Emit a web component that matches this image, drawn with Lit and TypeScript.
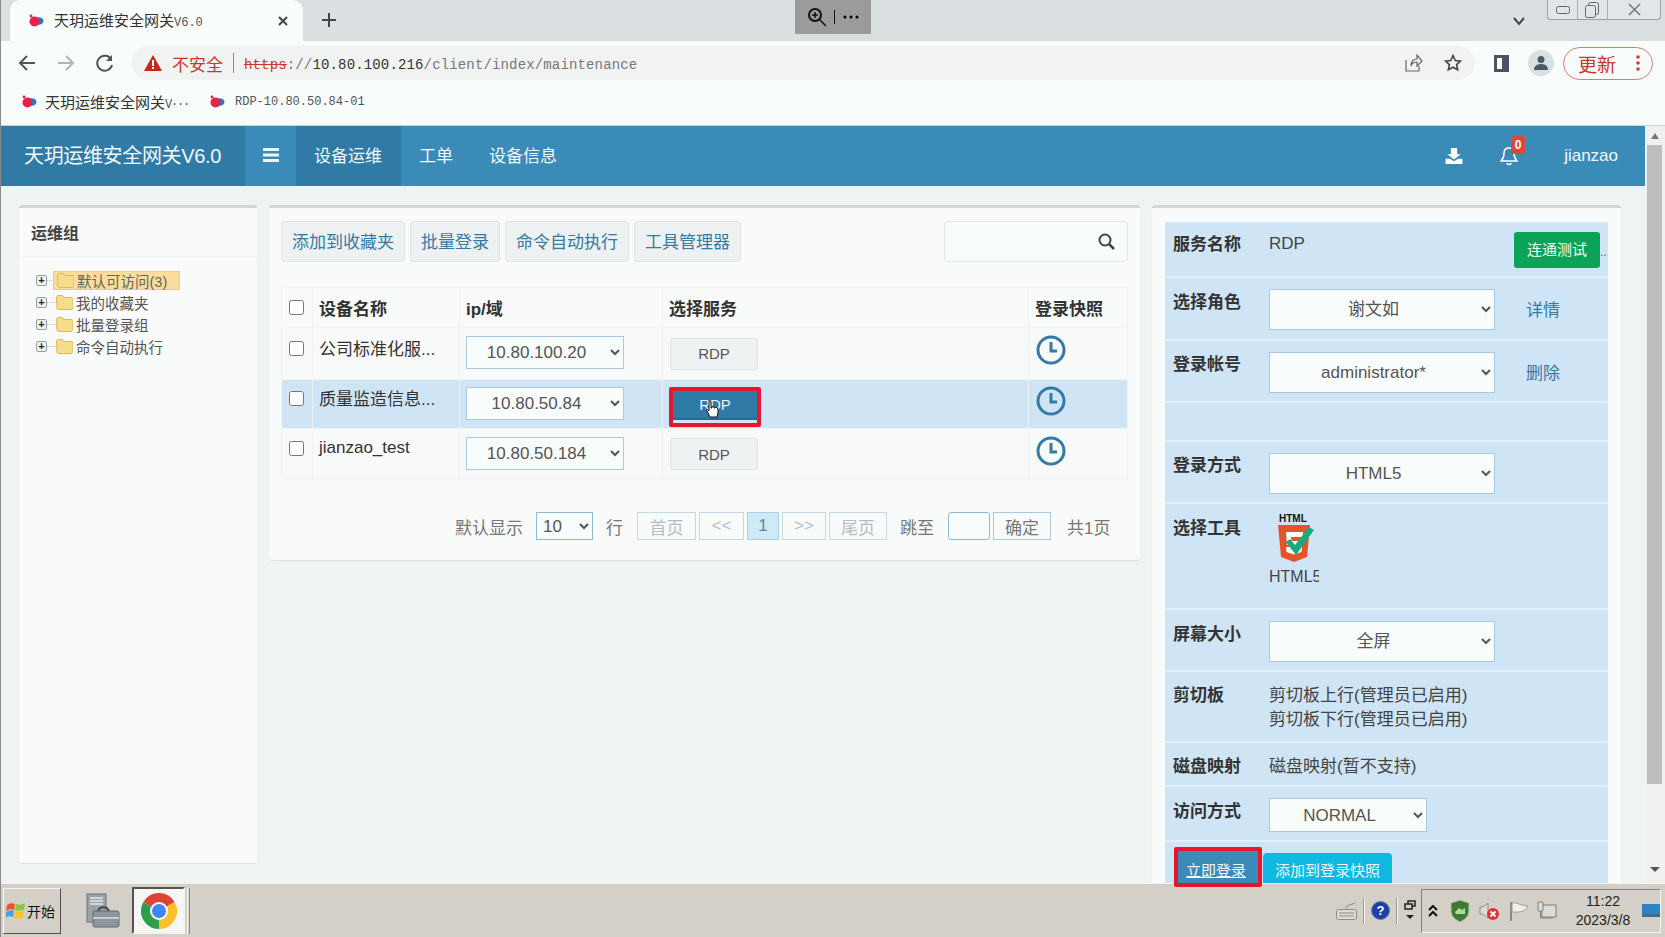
import { css, html, svg, LitElement } from "lit";
import { customElement } from "lit/decorators.js";

const bird = (s = 16) => html`<svg width=${s} height=${s} viewBox="0 0 16 16">
  <ellipse cx="10.500" cy="8" rx="5" ry="3.800" fill="#2b78c2" />
  <circle cx="6.500" cy="8.500" r="5" fill="#e8214a" />
  <circle cx="3" cy="3" r="1.400" fill="#e8214a" />
</svg>`;

const clock = html`<svg width="30" height="30" viewBox="0 0 30 30" fill="none" stroke="#3579a6">
  <circle cx="15" cy="15" r="13" stroke-width="3" />
  <path d="M15 7v9h6" stroke-width="3" />
</svg>`;

const folder = html`<svg width="17" height="15" viewBox="0 0 17 15">
  <path d="M.5 3V1.500l1-1h5l1.500 2h8l1 1v10l-1 1h-14l-1-1z" fill="#f6dd8c" stroke="#d9b95c" />
</svg>`;

const chromeLogo = html`<svg width="36" height="36" viewBox="0 0 36 36">
  <path d="M18 18L2.400 9A18 18 0 0 1 33.600 9Z" fill="#dc4437" />
  <path d="M18 18L33.600 9A18 18 0 0 1 18 36Z" fill="#fbc02d" />
  <path d="M18 18L18 36A18 18 0 0 1 2.400 9Z" fill="#2f9e48" />
  <circle cx="18" cy="18" r="9" fill="#fff" />
  <circle cx="18" cy="18" r="7" fill="#4285f4" />
</svg>`;

const rows = [
  { name: "公司标准化服...", ip: "10.80.100.20", h: 52 },
  { name: "质量监造信息...", ip: "10.80.50.84", h: 49, active: true },
  { name: "jianzao_test", ip: "10.80.50.184", h: 51 },
];

@customElement("app-root")
class AppRoot extends LitElement {
  static styles = css`
    :host {
      display: block;
      font-family: "Liberation Sans", "Noto Sans CJK SC", sans-serif;
      color: #444;
    }

    * {
      box-sizing: border-box;
    }

    .screen {
      position: relative;
      display: flex;
      flex-direction: column;
      width: 1665px;
      height: 937px;
      overflow: hidden;
      border-left: 1px solid #8a8a8a;
      background: #f8fcfa;
    }

    /* browser chrome */
    .tabstrip {
      display: flex;
      align-items: flex-end;
      height: 41px;
      padding-left: 9px;
      background: #dae0e2;
    }

    .tab {
      display: flex;
      align-items: center;
      width: 293px;
      height: 41px;
      padding: 0 14px 0 18px;
      gap: 10px;
      border-radius: 10px 10px 0 0;
      background: #f8fcfa;
      font-size: 15px;
      color: #333;
    }

    .tab-title {
      flex: 1;
      padding-bottom: 2px;
    }

    .tiny {
      font-family: "Liberation Mono", "Noto Sans CJK SC", monospace;
      font-size: 12px;
      color: #555;
    }

    .newtab {
      margin: 0 0 13px 18px;
    }

    .spacer {
      flex: 1;
    }

    .tabs-chevron {
      margin: 0 21px 15px 0;
    }

    .winctl {
      display: flex;
      align-self: flex-start;
      width: 114px;
      height: 20px;
      margin-right: 4px;
      border: 1px solid #98a0a4;
      border-top: 0;
      border-radius: 0 0 4px 4px;
      background: #e2e6e8;
    }

    .winctl span {
      display: flex;
      align-items: center;
      justify-content: center;
      border-right: 1px solid #a8b0b4;
      width: 30px;
    }

    .winctl span:last-child {
      flex: 1;
      border: 0;
    }

    .remote-bar {
      position: absolute;
      left: 794px;
      top: 0;
      display: flex;
      align-items: center;
      justify-content: space-around;
      width: 76px;
      height: 34px;
      padding: 0 8px;
      background: #9a9c9c;
    }

    .toolbar {
      display: flex;
      align-items: center;
      height: 44px;
      padding-left: 17px;
    }

    .nav-btn {
      display: flex;
      width: 39px;
    }

    .nav-btn.last {
      width: 36px;
    }

    .omnibox {
      display: flex;
      align-items: center;
      width: 1343px;
      height: 34px;
      padding-left: 12px;
      border-radius: 17px;
      background: #f1f3f3;
    }

    .not-secure {
      margin-left: 10px;
      font-size: 17px;
      color: #c5392b;
    }

    .omni-sep {
      width: 1px;
      height: 20px;
      margin: 0 10px;
      background: #888;
    }

    .url {
      padding-top: 3px;
      font-family: "Liberation Mono", monospace;
      font-size: 14px;
      letter-spacing: 0.15px;
      color: #777;
    }

    .url s {
      color: #c5392b;
    }

    .url b {
      font-weight: normal;
      color: #333;
    }

    .omni-icons {
      display: flex;
      align-items: center;
      gap: 21px;
      margin: 0 13px 0 auto;
    }

    .panel-icon {
      width: 15px;
      height: 17px;
      margin-left: 19px;
      border: 3px solid #4a5560;
      border-right-width: 7px;
    }

    .avatar {
      display: flex;
      align-items: center;
      justify-content: center;
      width: 26px;
      height: 26px;
      margin-left: 19px;
      border-radius: 50%;
      background: #d8e0e4;
    }

    .update {
      display: flex;
      align-items: center;
      justify-content: space-between;
      width: 90px;
      height: 33px;
      margin-left: 9px;
      padding: 0 12px 0 14px;
      border: 1px solid #d87c72;
      border-radius: 17px;
      font-size: 19px;
      color: #c5392b;
    }

    .bookmarks {
      display: flex;
      align-items: center;
      height: 41px;
      padding: 0 0 7px 20px;
      border-bottom: 1px solid #c8d6dc;
      font-size: 15px;
      color: #333;
    }

    .bookmarks .tiny {
      margin-left: 10px;
      color: #555;
    }

    .mark {
      display: flex;
      align-items: center;
      gap: 8px;
      width: 188px;
    }

    .bookmarks .mark .tiny {
      margin: 0;
      letter-spacing: -1.2px;
    }

    /* page */
    .page {
      display: flex;
      flex: 1;
      min-height: 0;
      overflow: hidden;
      background: #eff3f2;
    }

    .content {
      flex: 1;
      min-width: 0;
    }

    .scrollbar {
      display: flex;
      flex-direction: column;
      align-items: center;
      width: 18px;
      padding-right: 3px;
      background: #f0f0f0;
    }

    .thumb {
      width: 15px;
      height: 639px;
      margin-top: 6px;
      background: #bdbdbd;
    }

    .sb-up {
      margin-top: 7px;
      width: 0;
      height: 0;
      border: 4px solid transparent;
      border-top: 0;
      border-bottom: 6px solid #777;
    }

    .sb-down {
      margin-top: 83px;
      width: 0;
      height: 0;
      border: 5px solid transparent;
      border-bottom: 0;
      border-top: 5px solid #555;
    }

    .topnav {
      display: flex;
      align-items: center;
      height: 60px;
      margin-right: 2px;
      background: #3a8bb8;
      color: #f2f8fb;
      font-size: 17px;
    }

    .brand {
      display: flex;
      align-items: center;
      align-self: stretch;
      width: 244px;
      padding: 0 0 3px 23px;
      background: #2f7ba6;
      font-size: 20px;
      letter-spacing: -0.35px;
    }

    .burger {
      display: flex;
      justify-content: center;
      padding-bottom: 2px;
      width: 51px;
    }

    .nav-item {
      display: flex;
      align-items: center;
      align-self: stretch;
      padding: 0 18px 3px;
    }

    .nav-item.on {
      width: 105px;
      background: #2f7ba6;
    }

    .nav-right {
      display: flex;
      align-items: center;
      margin-left: auto;
      padding-right: 27px;
    }

    .bell {
      position: relative;
      display: flex;
      margin: 0 46px 0 37px;
    }

    .badge {
      position: absolute;
      left: 11px;
      top: -10px;
      width: 14px;
      height: 18px;
      border-radius: 3px;
      background: #d9483b;
      color: #fff;
      font-size: 12px;
      font-weight: bold;
      line-height: 18px;
      text-align: center;
    }

    .columns {
      display: flex;
      align-items: flex-start;
      gap: 12px;
      padding: 19px 0 0 18px;
    }

    .panel {
      border-top: 3px solid #d2d6da;
      border-radius: 3px;
      background: #f8fbfa;
      box-shadow: 0 1px 1px rgba(0, 0, 0, 0.08);
    }

    /* left tree */
    .side {
      width: 238px;
      height: 658px;
    }

    .side-head {
      height: 49px;
      padding: 12px 12px 0;
      border-bottom: 1px solid #f0f3f3;
      font-size: 16px;
      font-weight: bold;
      color: #444;
    }

    .tree {
      display: flex;
      flex-direction: column;
      gap: 3px;
      padding: 14px 0 0 17px;
      font-size: 14.5px;
      color: #555;
    }

    .node {
      display: flex;
      align-items: center;
      height: 19px;
    }

    .twist {
      display: flex;
      align-items: center;
      justify-content: center;
      width: 11px;
      height: 11px;
      border: 1px solid #9a9fa3;
      border-radius: 2px;
      background: #eef0f0;
      color: #222;
      font-size: 11px;
      font-weight: bold;
      line-height: 1;
    }

    .dash {
      width: 9px;
      border-top: 1px dotted #c0c4c8;
    }

    .leaf {
      display: flex;
      align-items: center;
      gap: 3px;
      height: 19px;
      padding: 0 3px 0 0;
    }

    .leaf.sel {
      width: 127px;
      margin-left: -3px;
      padding-left: 3px;
      border: 1px solid #f6c983;
      background: #fbdc9f;
      color: #665;
    }

    /* device list */
    .main {
      width: 871px;
      height: 355px;
      padding: 13px 12px 0;
    }

    .actions {
      display: flex;
      gap: 5px;
      height: 41px;
    }

    .act {
      height: 41px;
      padding: 0 10px 2px;
      border: 1px solid #e0e4e4;
      border-radius: 3px;
      background: #eef1f1;
      color: #3579a6;
      font: inherit;
      font-size: 17px;
    }

    .search {
      display: flex;
      align-items: center;
      justify-content: flex-end;
      width: 184px;
      margin-left: auto;
      padding-right: 12px;
      border: 1px solid #e4e7e7;
      border-radius: 3px;
      background: #f8fcfa;
    }

    table {
      width: 846px;
      margin-top: 25px;
      border-collapse: collapse;
      table-layout: fixed;
      font-size: 17px;
      color: #333;
    }

    th,
    td {
      padding: 0 0 0 6px;
      border: 1px solid #f0f3f3;
      text-align: left;
    }

    th {
      height: 40px;
      font-weight: bold;
    }

    tbody tr {
      background: #f8f9f9;
    }

    tbody tr.on {
      background: #cfe5f6;
    }

    .lift {
      padding-bottom: 11px;
    }

    .lift-s {
      padding-bottom: 2px;
    }

    .name {
      padding-bottom: 13px;
      white-space: nowrap;
      overflow: hidden;
    }

    input[type="checkbox"] {
      display: block;
      width: 15px;
      height: 15px;
      margin: 0 0 0 1px;
    }

    select {
      padding-right: 5px;
      border: 1px solid #a9c9e0;
      background: #f8fcfa;
      color: #555;
      font: inherit;
      font-size: 17px;
      text-align: center;
    }

    .ip {
      display: block;
      width: 158px;
      height: 33px;
      margin-bottom: 2px;
    }

    .rdp {
      display: block;
      width: 88px;
      height: 32px;
      margin-left: 1px;
      border: 1px solid #dfe3e3;
      border-radius: 3px;
      background: #eff2f2;
      color: #555;
      font: inherit;
      font-size: 15px;
    }

    .rdp-on {
      position: relative;
      width: 92px;
      height: 40px;
      margin: 5px 0 0;
      padding: 0 0 4px;
      border: 4px solid #e2182c;
      border-radius: 2px;
      background: #2f7ba6;
      box-shadow: inset 0 -3px 0 #cfe5f6, inset 0 -5px 0 #256a90;
      color: #eef6fa;
    }

    .hand {
      position: absolute;
      left: 33px;
      top: 10px;
    }

    .clock {
      display: block;
      margin-left: 1px;
    }

    .pager {
      display: flex;
      align-items: center;
      gap: 3px;
      height: 28px;
      margin: 32px 0 0 174px;
      font-size: 17px;
      color: #777;
    }

    .pager select {
      width: 57px;
      height: 28px;
      padding: 0 0 0 2px;
      border-color: #8fbad6;
      text-align: left;
    }

    .pg {
      display: flex;
      align-items: center;
      justify-content: center;
      height: 28px;
      border: 1px solid #c4d9e6;
      color: #b4bdc2;
    }

    .pg.cur {
      border-color: #a8d4ea;
      background: #cfe9f7;
      color: #5a8aa5;
    }

    .pg.ok {
      border-color: #a9c9e0;
      color: #777;
    }

    .gap {
      margin-left: 10px;
    }

    .gap-m {
      margin-left: 11px;
    }

    .gap-l {
      margin-left: 13px;
    }

    .jump {
      width: 42px;
      height: 28px;
      border: 1px solid #8fbad6;
      border-radius: 3px;
      background: #f8fcfa;
    }

    /* right form */
    .detail {
      width: 469px;
      height: 700px;
      padding: 14px 13px 0;
      font-size: 17px;
    }

    .form {
      width: 443px;
      background: #cfe5f6;
    }

    .row {
      display: grid;
      grid-template-columns: 96px 257px 1fr;
      padding-left: 8px;
      border-bottom: 2px solid #e0eff9;
      color: #444;
    }

    .label {
      color: #333;
      font-weight: bold;
    }

    .form select {
      display: block;
      width: 226px;
      height: 41px;
      margin-top: 1px;
    }

    .form select.short {
      width: 158px;
      height: 34px;
      margin-top: 0;
    }

    .link {
      padding-top: 8px;
      color: #3579a6;
    }

    .up {
      margin-top: -1px;
    }

    .svc-head {
      margin-top: -2px;
    }

    .svc-value {
      margin-top: 2px;
    }

    .test {
      width: 86px;
      height: 36px;
      margin-left: 1px;
      padding: 0 0 3px;
      border: 0;
      border-radius: 3px;
      background: #0aa358;
      color: #eafff3;
      font: inherit;
      font-size: 15px;
    }

    .more {
      position: absolute;
      left: 87px;
      bottom: 10px;
      font-size: 12px;
      line-height: 1;
      color: #667;
    }

    .test-wrap {
      position: relative;
      align-self: start;
      margin-left: -13px;
    }

    .tool {
      width: 50px;
      overflow: hidden;
      white-space: nowrap;
      font-size: 16px;
    }

    .tool b {
      display: block;
      margin-left: 10px;
      font-size: 10px;
      line-height: 10px;
      color: #111;
    }

    .tool svg {
      display: block;
      margin: -1px 0 5px 6px;
    }

    .clip {
      line-height: 24px;
    }

    .submit {
      display: flex;
      align-items: flex-start;
      gap: 3px;
      padding: 8px 0 0 12px;
    }

    .submit button {
      border: 0;
      color: #f0fafd;
      font: inherit;
      font-size: 15px;
    }

    .go {
      width: 83px;
      height: 40px;
      padding: 0 5px 2px 0;
      background: #3a8bb8;
      text-decoration: underline;
    }

    .snap {
      width: 129px;
      height: 34px;
      padding: 0 0 2px;
      margin-top: 3px;
      border-radius: 4px 4px 0 0;
      background: #0fb8e0;
    }

    .go-mark {
      position: absolute;
      left: 1173px;
      top: 847px;
      width: 88px;
      height: 40px;
      border: 4px solid #e2182c;
      border-radius: 2px;
    }

    /* windows taskbar */
    .taskbar {
      display: flex;
      align-items: center;
      flex: none;
      height: 54px;
      padding-left: 2px;
      border-top: 1px solid #f4f3ef;
      background: #d4d0c8;
    }

    .start {
      display: flex;
      align-items: center;
      gap: 1px;
      width: 58px;
      height: 46px;
      padding-left: 2px;
      border: 1px solid;
      border-color: #f4f3ef #55534e #55534e #f4f3ef;
      color: #111;
      font-size: 14px;
      white-space: nowrap;
    }

    .quick {
      display: flex;
      margin-left: 23px;
    }

    .running {
      display: flex;
      align-items: center;
      justify-content: center;
      width: 53px;
      height: 47px;
      margin-left: 12px;
      border: 2px solid;
      border-color: #55534e #f4f3ef #f4f3ef #55534e;
      background: #f6f7f5;
    }

    .grip {
      width: 3px;
      height: 46px;
      margin-left: 2px;
      border-left: 1px solid #f4f3ef;
      border-right: 1px solid #888;
    }

    .tray-left {
      display: flex;
      align-items: center;
      margin-left: auto;
    }

    .vsep {
      width: 2px;
      height: 26px;
      margin: 0 6px;
      border-left: 1px solid #999;
      border-right: 1px solid #f4f3ef;
    }

    .tray {
      display: flex;
      align-items: center;
      width: 240px;
      height: 44px;
      margin: 0 4px 0 5px;
      padding-left: 6px;
      border: 1px solid;
      border-color: #808080 #f4f3ef #f4f3ef #808080;
    }

    .tray svg {
      flex: none;
    }

    .time {
      width: 66px;
      margin-left: 14px;
      color: #222;
      font-size: 14px;
      line-height: 19px;
      text-align: center;
    }
  `;

  private renderChrome() {
    return html`<div class="tabstrip">
        <div class="tab">
          ${bird()}
          <span class="tab-title">天玥运维安全网关<span class="tiny">V6.0</span></span>
          <svg width="12" height="12" viewBox="0 0 12 12" stroke="#444" stroke-width="2">
            <path d="M2 2l8 8M10 2l-8 8" />
          </svg>
        </div>
        <svg class="newtab" width="16" height="16" viewBox="0 0 16 16" stroke="#444" stroke-width="2">
          <path d="M8 1v14M1 8h14" />
        </svg>
        <div class="spacer"></div>
        <svg class="tabs-chevron" width="14" height="9" viewBox="0 0 14 9" fill="none" stroke="#444" stroke-width="2">
          <path d="M2 1l5 6 5-6" />
        </svg>
        <div class="winctl">
          <span><svg width="14" height="8"><rect x=".5" y=".5" width="13" height="7" rx="2" fill="none" stroke="#666" /></svg></span>
          <span><svg width="15" height="16" fill="none" stroke="#666"><rect x="3.500" y=".5" width="10" height="12" rx="2" /><rect x=".5" y="3.500" width="10" height="12" rx="2" fill="#e2e6e8" /></svg></span>
          <span><svg width="13" height="13" fill="none" stroke="#777" stroke-width="1.500"><path d="M1 1l11 11M12 1L1 12" /></svg></span>
        </div>
      </div>
      <div class="remote-bar">
        <svg width="20" height="20" viewBox="0 0 20 20" fill="none" stroke="#111" stroke-width="2">
          <circle cx="8" cy="8" r="6" />
          <path d="M12 12l7 7M5 8h6M8 5v6" stroke-width="1.500" />
        </svg>
        <span style="width:1px;height:14px;background:#111"></span>
        <svg width="16" height="4"><circle cx="2" cy="2" r="1.500" /><circle cx="8" cy="2" r="1.500" /><circle cx="14" cy="2" r="1.500" /></svg>
      </div>
      <div class="toolbar">
        <div class="nav-btn">
          <svg width="18" height="18" viewBox="0 0 18 18" fill="none" stroke="#555" stroke-width="2"><path d="M17 9H3M9 2L2 9l7 7" /></svg>
        </div>
        <div class="nav-btn">
          <svg width="18" height="18" viewBox="0 0 18 18" fill="none" stroke="#b0b4b6" stroke-width="2"><path d="M1 9h14M9 2l7 7-7 7" /></svg>
        </div>
        <div class="nav-btn last">
          <svg width="18" height="18" viewBox="0 0 18 18" fill="none" stroke="#555" stroke-width="2"><path d="M15.500 6A7.500 7.500 0 1 0 16 11" /><path d="M16 1v6h-6" fill="#555" stroke="none" /></svg>
        </div>
        <div class="omnibox">
          <svg width="18" height="16" viewBox="0 0 18 16"><path d="M9 0l9 16H0z" fill="#c5281c" /><path d="M8 5h2v6H8zM8 12h2v2H8z" fill="#fff" /></svg>
          <span class="not-secure">不安全</span>
          <span class="omni-sep"></span>
          <span class="url"><s>https</s>://<b>10.80.100.216</b>/client/index/maintenance</span>
          <div class="omni-icons">
            <svg width="18" height="18" viewBox="0 0 18 18" fill="none" stroke="#666" stroke-width="1.200"><path d="M1 6v11h13v-5M6 12c0-5 3-7 6-7V1l5 6-5 5V8c-3 0-5 1-6 4z" /></svg>
            <svg width="18" height="18" viewBox="0 0 18 18" fill="none" stroke="#444" stroke-width="1.600"><path d="M9 1.500l2.300 5 5.200.6-3.900 3.500 1.100 5.200L9 13.200l-4.700 2.600 1.100-5.200L1.500 7.100l5.200-.6z" /></svg>
          </div>
        </div>
        <div class="panel-icon"></div>
        <div class="avatar">
          <svg width="16" height="16" viewBox="0 0 16 16" fill="#4a5a6a"><circle cx="8" cy="4.500" r="3.500" /><path d="M1 15c0-4 3-6 7-6s7 2 7 6z" /></svg>
        </div>
        <div class="update">
          更新
          <svg width="4" height="16" fill="#d9382c"><circle cx="2" cy="2" r="1.800" /><circle cx="2" cy="8" r="1.800" /><circle cx="2" cy="14" r="1.800" /></svg>
        </div>
      </div>
      <div class="bookmarks">
        <span class="mark">${bird()}<span>天玥运维安全网关<span class="tiny">V···</span></span></span>
        ${bird()}
        <span class="tiny">RDP-10.80.50.84-01</span>
      </div>`;
  }

  private renderNav() {
    return html`<div class="topnav">
      <div class="brand">天玥运维安全网关V6.0</div>
      <div class="burger">
        <svg width="16" height="14" fill="#eef6fa"><rect width="16" height="3" /><rect y="5.500" width="16" height="3" /><rect y="11" width="16" height="3" /></svg>
      </div>
      <div class="nav-item on">设备运维</div>
      <div class="nav-item">工单</div>
      <div class="nav-item">设备信息</div>
      <div class="nav-right">
        <svg width="18" height="16" viewBox="0 0 19 18" fill="#fff"><path d="M6 0h7v7h4l-7.500 6L2 7h4z" /><path d="M0 12h5l4.500 3 4.500-3h5v6H0z" /></svg>
        <div class="bell">
          <svg width="18" height="20" viewBox="0 0 18 20" fill="none" stroke="#fff" stroke-width="1.500"><path d="M9 2c-3 0-5 2-5 5 0 5-2 7-3 8h16c-1-1-3-3-3-8 0-3-2-5-5-5z" /><path d="M7 17c0 2 4 2 4 0" /></svg>
          <span class="badge">0</span>
        </div>
        jianzao
      </div>
    </div>`;
  }

  private renderSide() {
    const groups = ["默认可访问(3)", "我的收藏夹", "批量登录组", "命令自动执行"];
    return html`<section class="panel side">
      <div class="side-head">运维组</div>
      <div class="tree">
        ${groups.map(
          (g, i) => html`<div class="node">
            <span class="twist">+</span>
            <span class="dash"></span>
            <span class="leaf ${i === 0 ? "sel" : ""}">${folder}${g}</span>
          </div>`
        )}
      </div>
    </section>`;
  }

  private renderMain() {
    return html`<section class="panel main">
      <div class="actions">
        <button class="act">添加到收藏夹</button>
        <button class="act">批量登录</button>
        <button class="act">命令自动执行</button>
        <button class="act">工具管理器</button>
        <div class="search">
          <svg width="17" height="17" viewBox="0 0 17 17" fill="none" stroke="#444" stroke-width="2"><circle cx="7" cy="7" r="5.500" /><path d="M11 11l5 5" stroke-width="2.500" /></svg>
        </div>
      </div>
      <table>
        <colgroup>
          <col style="width:31px" />
          <col style="width:147px" />
          <col style="width:203px" />
          <col style="width:366px" />
          <col style="width:99px" />
        </colgroup>
        <thead>
          <tr>
            <th><input type="checkbox" /></th>
            <th>设备名称</th>
            <th>ip/域</th>
            <th>选择服务</th>
            <th>登录快照</th>
          </tr>
        </thead>
        <tbody>
          ${rows.map(
            (r) => html`<tr class=${r.active ? "on" : ""} style="height:${r.h}px">
              <td class="lift"><input type="checkbox" /></td>
              <td class="name">${r.name}</td>
              <td><select class="ip"><option>${r.ip}</option></select></td>
              <td>
                ${r.active
                  ? html`<button class="rdp rdp-on">
                      RDP
                      <svg class="hand" width="13" height="17" viewBox="0 0 13 17">
                        <path d="M3 1.500c0-1 2-1 2 0V7h1V6c0-1 2-1 2 0v1h1c0-1 2-1 2 0l1 1v4l-1 4H4L1 10c-1-1 0-2 1-1l1 1z" fill="#fff" stroke="#111" />
                      </svg>
                    </button>`
                  : html`<button class="rdp">RDP</button>`}
              </td>
              <td class="lift-s"><span class="clock">${clock}</span></td>
            </tr>`
          )}
        </tbody>
      </table>
      <div class="pager">
        <span>默认显示</span>
        <select class="gap"><option>10</option></select>
        <span class="gap">行</span>
        <span class="pg gap-m" style="width:59px">首页</span>
        <span class="pg" style="width:45px">&lt;&lt;</span>
        <span class="pg cur" style="width:32px">1</span>
        <span class="pg" style="width:44px">&gt;&gt;</span>
        <span class="pg" style="width:58px">尾页</span>
        <span class="gap">跳至</span>
        <span class="jump gap-m"></span>
        <span class="pg ok" style="width:58px">确定</span>
        <span class="gap-l">共1页</span>
      </div>
    </section>`;
  }

  private renderDetail() {
    return html`<section class="panel detail">
      <div class="form">
        <div class="row" style="height:56px;padding-top:10px">
          <span class="label svc-head">服务名称</span>
          <span class="svc-value">RDP</span>
          <div class="test-wrap">
            <button class="test">连通测试</button>
            <span class="more">..</span>
          </div>
        </div>
        <div class="row" style="height:63px;padding-top:10px">
          <span class="label">选择角色</span>
          <select><option>谢文如</option></select>
          <span class="link">详情</span>
        </div>
        <div class="row" style="height:62px;padding-top:10px">
          <span class="label up">登录帐号</span>
          <select><option>administrator*</option></select>
          <span class="link">删除</span>
        </div>
        <div class="row" style="height:39px"></div>
        <div class="row" style="height:62px;padding-top:10px">
          <span class="label up">登录方式</span>
          <select><option>HTML5</option></select>
        </div>
        <div class="row" style="height:106px;padding-top:10px">
          <span class="label">选择工具</span>
          <div class="tool">
            <b>HTML</b>
            <svg width="42" height="40" viewBox="0 0 40 40">
              ${svg`<path d="M2 2h32l-3 32-13 5-13-5z" fill="#e5532a" />
              <path d="M10 9h17v5H15l.5 4h11l-1 11-7.500 2.500-7.500-2.500-.5-5h4.500l.3 2 3.200 1 3.200-1 .4-4H11z" fill="#fff" />
              <path d="M10 19l4-3 5 6L33 4l5 3-18 25z" fill="#17a97f" />`}
            </svg>
            HTML5
          </div>
        </div>
        <div class="row" style="height:62px;padding-top:10px">
          <span class="label">屏幕大小</span>
          <select><option>全屏</option></select>
        </div>
        <div class="row clip" style="height:71px;padding-top:12px">
          <span class="label">剪切板</span>
          <div style="grid-column:span 2">剪切板上行(管理员已启用)<br />剪切板下行(管理员已启用)</div>
        </div>
        <div class="row" style="height:44px;padding-top:9px">
          <span class="label">磁盘映射</span>
          <span style="grid-column:span 2">磁盘映射(暂不支持)</span>
        </div>
        <div class="row" style="height:55px;padding-top:11px">
          <span class="label up">访问方式</span>
          <select class="short"><option>NORMAL</option></select>
        </div>
        <div class="submit">
          <button class="go">立即登录</button>
          <button class="snap">添加到登录快照</button>
        </div>
      </div>
    </section>`;
  }

  private renderTaskbar() {
    return html`<div class="taskbar">
      <div class="start">
        <svg width="20" height="20" viewBox="0 0 20 20">
          <path d="M1 4c3-2 5-2 8-1L8 9C5 8 3 8 0 10z" fill="#e8582c" />
          <path d="M10 3c3 1 5 1 9-1l-1 7c-3 1-6 1-9 0z" fill="#8cc63f" />
          <path d="M0 11c3-2 5-2 8-1l-1 6c-3-1-5-1-8 1z" fill="#4a9fe0" />
          <path d="M9 10c3 1 5 1 9 0l-1 7c-3 1-6 1-9-1z" fill="#f8c52c" />
        </svg>
        开始
      </div>
      <div class="quick">
        <svg width="36" height="36" viewBox="0 0 36 36">
          <rect x="3" y="1" width="19" height="28" fill="#9aa3a8" stroke="#6c7478" />
          <path d="M6 5h13M6 8h13M6 11h13" stroke="#e4e8ea" stroke-width="1.500" />
          <path d="M14 18c2-5 9-5 11 0" fill="none" stroke="#444" stroke-width="2" />
          <rect x="9" y="18" width="26" height="16" rx="2" fill="#8c979d" stroke="#5f686d" />
          <path d="M9 25h26" stroke="#c5ccd0" stroke-width="2" />
        </svg>
      </div>
      <div class="running">${chromeLogo}</div>
      <div class="grip"></div>
      <div class="tray-left">
        <svg width="21" height="18" viewBox="0 0 21 18" fill="#dcdad4" stroke="#8c8c88">
          <rect x=".5" y="7.500" width="20" height="10" rx="2" />
          <path d="M3 11h15M3 14h15M10 7l1-3 8-3" fill="none" />
        </svg>
        <span class="vsep"></span>
        <svg width="19" height="19" viewBox="0 0 19 19">
          <circle cx="9.500" cy="9.500" r="9" fill="#1c3fa8" stroke="#6a7a9a" />
          <text x="9.500" y="14" fill="#fff" font-size="13" font-weight="bold" text-anchor="middle" font-family="Liberation Sans">?</text>
        </svg>
        <span class="vsep"></span>
        <svg width="12" height="22" viewBox="0 0 12 22" fill="none" stroke="#222" stroke-width="1.500">
          <rect x="1" y="4" width="7" height="5" />
          <path d="M4 4V1h7v5H8" />
          <path d="M2 15h8l-4 4z" fill="#222" stroke="none" />
        </svg>
      </div>
      <div class="tray">
        <svg width="10" height="12" viewBox="0 0 10 12" fill="none" stroke="#111" stroke-width="2"><path d="M1 5l4-4 4 4M1 11l4-4 4 4" /></svg>
        <svg style="margin-left:11px" width="22" height="24" viewBox="0 0 22 24">
          <path d="M11 1l9 3v8c0 6-5 9-9 11-4-2-9-5-9-11V4z" fill="#3f7a35" stroke="#b8c8a0" />
          <path d="M6 13l4-4 3 2 3-2v6H7z" fill="#b0d89a" />
        </svg>
        <svg style="margin-left:7px" width="22" height="20" viewBox="0 0 22 20">
          <path d="M2 6h3l5-4v15l-5-4H2z" fill="#dcdcd8" stroke="#8c8c88" />
          <circle cx="15" cy="13" r="6" fill="#e03434" />
          <path d="M12.500 10.500l5 5M17.500 10.500l-5 5" stroke="#fff" stroke-width="1.800" />
        </svg>
        <svg style="margin-left:9px" width="20" height="20" viewBox="0 0 20 20">
          <path d="M2 1v19" stroke="#888" stroke-width="2" />
          <path d="M3 2c5-1 6 2 16 3-2 3-4 7-16 6z" fill="#f0f0ec" stroke="#9a9a96" />
        </svg>
        <svg style="margin-left:8px" width="20" height="20" viewBox="0 0 20 20" fill="#dcdcd8" stroke="#7c7c78">
          <rect x="5" y="4" width="14" height="12" />
          <rect x="1" y="1" width="5" height="9" rx="1" />
          <path d="M3.500 10v7h12" fill="none" />
        </svg>
        <div class="time">11:22<br />2023/3/8</div>
        <svg style="margin-left:7px" width="18" height="13">
          <rect width="18" height="13" fill="#2f82c8" />
          <rect y="10" width="18" height="3" fill="#4a6a80" />
        </svg>
      </div>
    </div>`;
  }

  render() {
    return html`<div class="screen">
      ${this.renderChrome()}
      <div class="page">
        <div class="content">
          ${this.renderNav()}
          <div class="columns">
            ${this.renderSide()} ${this.renderMain()} ${this.renderDetail()}
          </div>
        </div>
        <div class="scrollbar">
          <span class="sb-up"></span>
          <div class="thumb"></div>
          <span class="sb-down"></span>
        </div>
      </div>
      ${this.renderTaskbar()}
      <div class="go-mark"></div>
    </div>`;
  }
}

declare global {
  interface HTMLElementTagNameMap {
    "app-root": AppRoot;
  }
}
